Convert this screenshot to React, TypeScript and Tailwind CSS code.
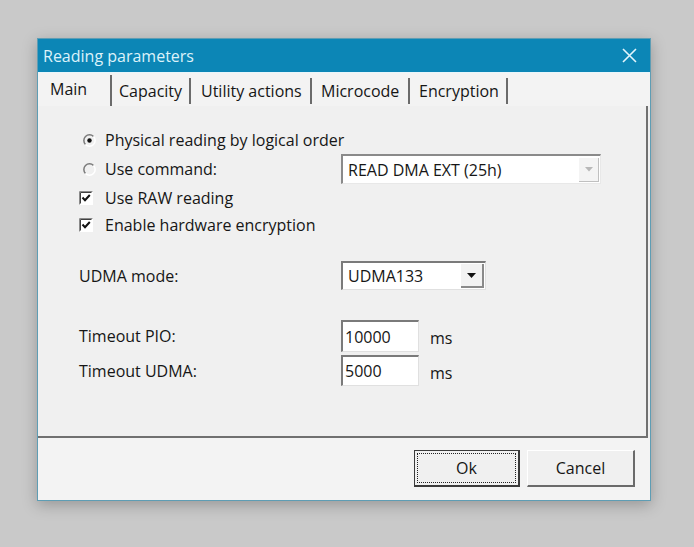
import React from "react";

const font = { fontFamily: '"Open Sans", "Noto Sans", sans-serif' };

function Radio({ checked }: { checked?: boolean }) {
  return (
    <svg width="13" height="13" viewBox="0 0 13 13" className="shrink-0">
      <path d="M10.5 2.5 A5.5 5.5 0 0 0 2.5 10.5" fill="none" stroke="#7a7a7a" strokeWidth="1.5" />
      <path d="M2.5 10.5 A5.5 5.5 0 0 0 10.5 2.5" fill="none" stroke="#ffffff" strokeWidth="1.5" />
      {checked && <circle cx="6.5" cy="6.5" r="2.2" fill="#111" />}
    </svg>
  );
}

function Check() {
  return (
    <svg width="14" height="14" viewBox="0 0 14 14" className="shrink-0">
      <rect x="0" y="0" width="14" height="14" fill="#ffffff" />
      <path d="M0.5 13.5 V0.5 H13.5" fill="none" stroke="#8a8a8a" strokeWidth="1" />
      <path d="M1.5 12.5 V1.5 H12.5" fill="none" stroke="#404040" strokeWidth="1" />
      <path d="M3.5 6.5 L6 9.2 L10.8 4" fill="none" stroke="#111" strokeWidth="2" />
    </svg>
  );
}

function Tab({ label, selected, w, pl }: { label: string; selected?: boolean; w: string; pl: string }) {
  return (
    <div
      className={`${w} ${pl} flex items-center border-r-2 border-[#6b6b6b] ${
        selected ? "h-[31px] self-end pb-[4px]" : "h-[26px] mb-[2px] self-end"
      }`}
    >
      <span className="text-[16px] text-[#161616] leading-none">{label}</span>
    </div>
  );
}

export default function App() {
  return (
    <div className="w-[694px] h-[547px] bg-[#c9c9c9] pt-[38px] pl-[37px]" style={font}>
      <div className="w-[614px] h-[463px] flex flex-col border border-[#5e9db4] bg-[#f0f0f0] shadow-[0_4px_14px_rgba(0,0,0,0.25)]">
        {/* Title bar */}
        <div className="h-[33px] bg-[#0c86b6] flex items-center justify-between pl-[5px] pr-[13px]">
          <span className="text-[16px] text-[#dcf2fa]">Reading parameters</span>
          <svg width="15" height="15" viewBox="0 0 15 15">
            <path d="M1 1 L14 14 M14 1 L1 14" stroke="#e3f5fc" strokeWidth="1.6" />
          </svg>
        </div>
        {/* Tabs */}
        <div className="h-[34px] flex pl-[2px] border-t border-[#e8f6fb] bg-[#f3f3f3]">
          <Tab label="Main" selected w="w-[72px]" pl="pl-[10px]" />
          <Tab label="Capacity" w="w-[79px]" pl="pl-[7px]" />
          <Tab label="Utility actions" w="w-[121px]" pl="pl-[10px]" />
          <Tab label="Microcode" w="w-[98px]" pl="pl-[9px]" />
          <Tab label="Encryption" w="w-[98px]" pl="pl-[9px]" />
        </div>
        {/* Panel */}
        <div className="flex-1 mr-[2px] border-r-2 border-b-2 border-[#707070] bg-[#f0f0f0] pl-[41px] pt-[20px] text-[16px] text-[#161616]">
          <div className="h-[28px] flex items-center">
            <div className="w-[26px] pl-[4px]"><Radio checked /></div>
            <span>Physical reading by logical order</span>
          </div>
          <div className="h-[30px] flex items-center">
            <div className="w-[26px] pl-[4px]"><Radio /></div>
            <span className="w-[236px]">Use command:</span>
            <div className="w-[260px] h-[30px] flex items-center bg-white border-t-2 border-l-2 border-[#8a8a8a] border-b border-r border-b-[#e8e8e8] border-r-[#e8e8e8]">
              <span className="flex-1 pl-[5px]">READ DMA EXT (25h)</span>
              <div className="w-[20px] h-[24px] mr-[1px] flex items-center justify-center bg-[#f4f4f4] border-r border-b border-[#c0c0c0]">
                <svg width="8" height="5" viewBox="0 0 8 5"><path d="M0 0 H8 L4 4.5 Z" fill="#b8b8b8" /></svg>
              </div>
            </div>
          </div>
          <div className="h-[27px] flex items-center">
            <div className="w-[26px]"><Check /></div>
            <span>Use RAW reading</span>
          </div>
          <div className="h-[27px] flex items-center">
            <div className="w-[26px]"><Check /></div>
            <span>Enable hardware encryption</span>
          </div>
          <div className="h-[29px] mt-[23px] flex items-center">
            <span className="w-[262px]">UDMA mode:</span>
            <div className="w-[145px] h-[29px] flex items-center bg-white border-t-2 border-l-2 border-[#7a7a7a] border-b border-r border-b-[#e0e0e0] border-r-[#e0e0e0]">
              <span className="flex-1 pl-[5px]">UDMA133</span>
              <div className="w-[23px] h-[24px] mr-[1px] flex items-center justify-center bg-[#f2f2f2] border-r-2 border-b-2 border-[#8a8a8a]">
                <svg width="9" height="5" viewBox="0 0 9 5"><path d="M0 0 H9 L4.5 5 Z" fill="#111" /></svg>
              </div>
            </div>
          </div>
          <div className="h-[32px] mt-[30px] flex items-center">
            <span className="w-[262px]">Timeout PIO:</span>
            <div className="w-[78px] h-[32px] flex items-center bg-white border-t-2 border-l-2 border-[#7a7a7a] border-b border-r border-b-[#e0e0e0] border-r-[#e0e0e0] pl-[2px]">10000</div>
            <span className="pl-[11px] pt-[4px]">ms</span>
          </div>
          <div className="h-[31px] mt-[3px] flex items-center">
            <span className="w-[262px]">Timeout UDMA:</span>
            <div className="w-[78px] h-[31px] flex items-center bg-white border-t-2 border-l-2 border-[#7a7a7a] border-b border-r border-b-[#e0e0e0] border-r-[#e0e0e0] pl-[2px]">5000</div>
            <span className="pl-[11px] pt-[4px]">ms</span>
          </div>
        </div>
        {/* Footer */}
        <div className="h-[62px] flex justify-end items-start pt-[12px] pr-[15px] gap-[7px] bg-[#f3f3f3] text-[16px] text-[#161616]">
          <div className="w-[106px] h-[37px] border border-[#3a3a3a] bg-[#f0f0f0] p-[2px] border-b-2 border-r-2">
            <div className="w-full h-full border border-dotted border-[#222] flex items-center justify-center">Ok</div>
          </div>
          <div className="w-[108px] h-[37px] bg-[#f0f0f0] border-t border-l border-[#ffffff] border-r-2 border-b-2 border-r-[#6a6a6a] border-b-[#6a6a6a] flex items-center justify-center">
            Cancel
          </div>
        </div>
      </div>
    </div>
  );
}
